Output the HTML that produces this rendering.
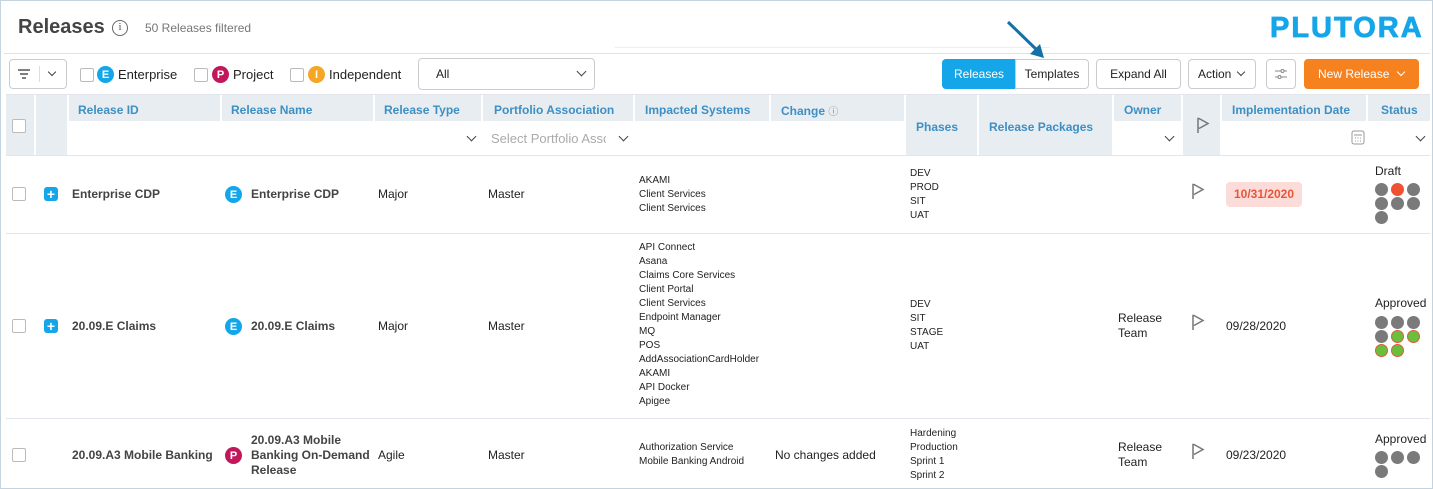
<!DOCTYPE html><html><head><style>
*{box-sizing:border-box;margin:0;padding:0}
body{width:1433px;height:489px;overflow:hidden;background:#fff;font-family:"Liberation Sans",Arial,sans-serif;position:relative;color:#222}
.a{position:absolute}
.frame{left:0;top:0;width:1433px;height:489px;border:1px solid #c5d3de}
.hg{position:absolute;background:#e8edf1}
.ht{position:absolute;color:#3d8fc4;font-weight:bold;font-size:12px}
.cb{position:absolute;width:14px;height:14px;border:1px solid #bbb;background:#fff;border-radius:2px}
.btn{position:absolute;height:30px;border:1px solid #ccc;border-radius:4px;font-size:12px;display:flex;align-items:center;justify-content:center;background:#fff}
.t13{font-size:12px}
.sm{font-size:10px;line-height:14px}
.b{font-weight:bold;color:#444}
.circ{position:absolute;width:17px;height:17px;border-radius:50%;color:#fff;font-weight:bold;font-size:11px;display:flex;align-items:center;justify-content:center}
.plus{position:absolute;width:14px;height:14px;background:#14a6e8;border-radius:3px;color:#fff;font-weight:bold;font-size:14px;line-height:14px;text-align:center}
.d{position:absolute;width:13px;height:13px;border-radius:50%;background:#7a7a7a}
.g{background:#6cbf3c;border:1px solid #e8553a}
.line{position:absolute;height:1px;background:#e2e6ea;left:6px;width:1424px}
.chev{position:absolute;width:7px;height:7px;border-right:1.5px solid #444;border-bottom:1.5px solid #444;transform:rotate(45deg)}
</style></head><body>
<div class="a frame"></div>
<div class="a" style="left:18px;top:16px;font-size:20px;font-weight:bold;color:#444">Releases</div>
<div class="a" style="left:112px;top:20px;width:16px;height:16px;border:1.5px solid #666;border-radius:50%;font-size:11px;text-align:center;line-height:13px;color:#555;font-family:'Liberation Serif',serif">i</div>
<div class="a" style="left:145px;top:21px;font-size:12px;color:#777">50 Releases filtered</div>
<div class="a" style="left:1270px;top:12px;font-size:29px;font-weight:bold;color:#14a6e8;letter-spacing:2px;-webkit-text-stroke:0.8px #14a6e8">PLUTORA</div>
<div class="a" style="left:615px;top:47px;width:435px;height:1px;background:#eee"></div>
<div class="a" style="left:4px;top:53px;width:1426px;height:1px;background:#dde3e8"></div>
<svg class="a" style="left:1000px;top:18px" width="50" height="45"><line x1="8" y1="4" x2="40" y2="35" stroke="#1570a6" stroke-width="3"/><polygon points="44,40 30,36 40,26" fill="#1570a6"/></svg>
<div class="btn" style="left:9px;top:59px;width:58px">&nbsp;</div>
<svg class="a" style="left:17px;top:69px" width="14" height="10"><path d="M1 1h12M3 5h8M5 9h4" stroke="#555" stroke-width="1.4"/></svg>
<div class="a" style="left:39px;top:66px;width:1px;height:16px;background:#ddd"></div>
<div class="chev" style="left:49px;top:69px;width:6px;height:6px"></div>
<div class="cb" style="left:80px;top:68px"></div><div class="circ" style="left:97px;top:66px;background:#14a6e8">E</div><div class="a" style="left:118px;top:67px;font-size:13px">Enterprise</div>
<div class="cb" style="left:194px;top:68px"></div><div class="circ" style="left:212px;top:66px;background:#c2185b">P</div><div class="a" style="left:233px;top:67px;font-size:13px">Project</div>
<div class="cb" style="left:290px;top:68px"></div><div class="circ" style="left:308px;top:66px;background:#f5a623">I</div><div class="a" style="left:329px;top:67px;font-size:13px">Independent</div>
<div class="btn" style="left:418px;top:58px;width:177px;height:32px;justify-content:flex-start;padding-left:17px">All</div>
<div class="chev" style="left:578px;top:68px"></div>
<div class="btn" style="left:942px;top:59px;width:74px;background:#14a6e8;color:#fff;border-color:#14a6e8;border-radius:4px 0 0 4px">Releases</div>
<div class="btn" style="left:1015px;top:59px;width:74px;border-radius:0 4px 4px 0">Templates</div>
<div class="btn" style="left:1096px;top:59px;width:85px">Expand All</div>
<div class="btn" style="left:1188px;top:59px;width:68px;justify-content:flex-start;padding-left:9px">Action</div>
<div class="chev" style="left:1238px;top:69px;width:6px;height:6px"></div>
<div class="btn" style="left:1266px;top:59px;width:30px"><svg width="14" height="12"><path d="M1 3h6M10 3h3M1 9h3M7 9h6" stroke="#888" stroke-width="1"/><circle cx="8.5" cy="3" r="1.5" fill="none" stroke="#888"/><circle cx="5.5" cy="9" r="1.5" fill="none" stroke="#888"/></svg></div>
<div class="btn" style="left:1304px;top:59px;width:115px;background:#f5821f;border-color:#f5821f;color:#fff;justify-content:flex-start;padding-left:13px">New Release</div>
<div class="chev" style="left:1398px;top:69px;width:6px;height:6px;border-color:#fff"></div>
<div class="line" style="top:94px"></div>
<div class="hg" style="left:6px;top:95px;width:28px;height:60px"></div>
<div class="hg" style="left:36px;top:95px;width:31px;height:60px"></div>
<div class="hg" style="left:69px;top:95px;width:151px;height:26px"></div>
<div class="hg" style="left:222px;top:95px;width:151px;height:26px"></div>
<div class="hg" style="left:375px;top:95px;width:106px;height:26px"></div>
<div class="hg" style="left:483px;top:95px;width:150px;height:26px"></div>
<div class="hg" style="left:635px;top:95px;width:134px;height:26px"></div>
<div class="hg" style="left:771px;top:95px;width:133px;height:26px"></div>
<div class="hg" style="left:906px;top:95px;width:71px;height:60px"></div>
<div class="hg" style="left:979px;top:95px;width:133px;height:60px"></div>
<div class="hg" style="left:1114px;top:95px;width:67px;height:26px"></div>
<div class="hg" style="left:1183px;top:95px;width:37px;height:60px"></div>
<div class="hg" style="left:1222px;top:95px;width:144px;height:26px"></div>
<div class="hg" style="left:1368px;top:95px;width:62px;height:26px"></div>
<div class="cb" style="left:12px;top:119px"></div>
<div class="ht" style="left:78px;top:103px">Release ID</div>
<div class="ht" style="left:231px;top:103px">Release Name</div>
<div class="ht" style="left:384px;top:103px">Release Type</div>
<div class="ht" style="left:494px;top:103px">Portfolio Association</div>
<div class="ht" style="left:645px;top:103px">Impacted Systems</div>
<div class="ht" style="left:781px;top:103px">Change <span style="font-weight:normal;font-size:10px;color:#888">ⓘ</span></div>
<div class="ht" style="left:916px;top:120px">Phases</div>
<div class="ht" style="left:989px;top:120px">Release Packages</div>
<div class="ht" style="left:1124px;top:103px">Owner</div>
<div class="ht" style="left:1232px;top:103px">Implementation Date</div>
<div class="ht" style="left:1381px;top:103px">Status</div>
<div class="chev" style="left:468px;top:133px"></div>
<div class="a" style="left:491px;top:131px;font-size:13px;color:#aaa;width:115px;overflow:hidden;white-space:nowrap">Select Portfolio Assc</div>
<div class="chev" style="left:620px;top:133px"></div>
<div class="chev" style="left:1166px;top:133px"></div>
<div class="chev" style="left:1417px;top:133px"></div>
<svg class="a" style="left:1196px;top:117px" width="14" height="17"><path d="M2 16V1.5h1l9 5-9 5" fill="none" stroke="#777" stroke-width="1.5"/></svg>
<svg class="a" style="left:1351px;top:130px" width="14" height="15"><rect x="1" y="1" width="12" height="13" rx="2" fill="none" stroke="#999"/><path d="M3 5h8M4 8h1M6.5 8h1M9 8h1M4 11h1M6.5 11h1M9 11h1" stroke="#999"/></svg>
<div class="line" style="top:155px"></div>
<div class="cb" style="left:12px;top:187px"></div><div class="plus" style="left:44px;top:187px">+</div>
<div class="a t13 b" style="left:72px;top:187px">Enterprise CDP</div>
<div class="circ" style="left:225px;top:186px;background:#14a6e8">E</div><div class="a t13 b" style="left:251px;top:187px">Enterprise CDP</div>
<div class="a t13" style="left:378px;top:187px">Major</div><div class="a t13" style="left:488px;top:187px">Master</div>
<div class="a sm" style="left:639px;top:174px">AKAMI<br>Client Services<br>Client Services</div>
<div class="a sm" style="left:910px;top:167px">DEV<br>PROD<br>SIT<br>UAT</div>
<svg class="a" style="left:1191px;top:183px" width="14" height="17"><path d="M2 16V1.5h1l9 5-9 5" fill="none" stroke="#777" stroke-width="1.5"/></svg>
<div class="a" style="left:1226px;top:182px;width:76px;height:25px;background:#fcdcd8;border-radius:4px;color:#e8553a;font-weight:bold;font-size:12px;text-align:center;line-height:25px">10/31/2020</div>
<div class="a t13" style="left:1375px;top:164px">Draft</div>
<div class="d" style="left:1375px;top:183px"></div><div class="d" style="left:1391px;top:183px;background:#ee5233"></div><div class="d" style="left:1407px;top:183px"></div>
<div class="d" style="left:1375px;top:197px"></div><div class="d" style="left:1391px;top:197px"></div><div class="d" style="left:1407px;top:197px"></div>
<div class="d" style="left:1375px;top:211px"></div>
<div class="line" style="top:233px"></div>
<div class="cb" style="left:12px;top:319px"></div><div class="plus" style="left:44px;top:319px">+</div>
<div class="a t13 b" style="left:72px;top:319px">20.09.E Claims</div>
<div class="circ" style="left:225px;top:318px;background:#14a6e8">E</div><div class="a t13 b" style="left:251px;top:319px">20.09.E Claims</div>
<div class="a t13" style="left:378px;top:319px">Major</div><div class="a t13" style="left:488px;top:319px">Master</div>
<div class="a sm" style="left:639px;top:241px">API Connect<br>Asana<br>Claims Core Services<br>Client Portal<br>Client Services<br>Endpoint Manager<br>MQ<br>POS<br>AddAssociationCardHolder<br>AKAMI<br>API Docker<br>Apigee</div>
<div class="a sm" style="left:910px;top:298px">DEV<br>SIT<br>STAGE<br>UAT</div>
<div class="a t13" style="left:1118px;top:311px;line-height:15px">Release<br>Team</div>
<svg class="a" style="left:1191px;top:314px" width="14" height="17"><path d="M2 16V1.5h1l9 5-9 5" fill="none" stroke="#777" stroke-width="1.5"/></svg>
<div class="a t13" style="left:1226px;top:319px">09/28/2020</div>
<div class="a t13" style="left:1375px;top:296px">Approved</div>
<div class="d" style="left:1375px;top:316px"></div><div class="d" style="left:1391px;top:316px"></div><div class="d" style="left:1407px;top:316px"></div>
<div class="d" style="left:1375px;top:330px"></div><div class="d g" style="left:1391px;top:330px"></div><div class="d g" style="left:1407px;top:330px"></div>
<div class="d g" style="left:1375px;top:344px"></div><div class="d g" style="left:1391px;top:344px"></div>
<div class="line" style="top:418px"></div>
<div class="cb" style="left:12px;top:448px"></div>
<div class="a t13 b" style="left:72px;top:448px">20.09.A3 Mobile Banking</div>
<div class="circ" style="left:225px;top:447px;background:#c2185b">P</div><div class="a t13 b" style="left:251px;top:433px;line-height:15px">20.09.A3 Mobile<br>Banking On-Demand<br>Release</div>
<div class="a t13" style="left:378px;top:448px">Agile</div><div class="a t13" style="left:488px;top:448px">Master</div>
<div class="a sm" style="left:639px;top:441px">Authorization Service<br>Mobile Banking Android</div>
<div class="a t13" style="left:775px;top:448px">No changes added</div>
<div class="a sm" style="left:910px;top:427px">Hardening<br>Production<br>Sprint 1<br>Sprint 2</div>
<div class="a t13" style="left:1118px;top:440px;line-height:15px">Release<br>Team</div>
<svg class="a" style="left:1191px;top:443px" width="14" height="17"><path d="M2 16V1.5h1l9 5-9 5" fill="none" stroke="#777" stroke-width="1.5"/></svg>
<div class="a t13" style="left:1226px;top:448px">09/23/2020</div>
<div class="a t13" style="left:1375px;top:432px">Approved</div>
<div class="d" style="left:1375px;top:451px"></div><div class="d" style="left:1391px;top:451px"></div><div class="d" style="left:1407px;top:451px"></div>
<div class="d" style="left:1375px;top:465px"></div>
</body></html>
